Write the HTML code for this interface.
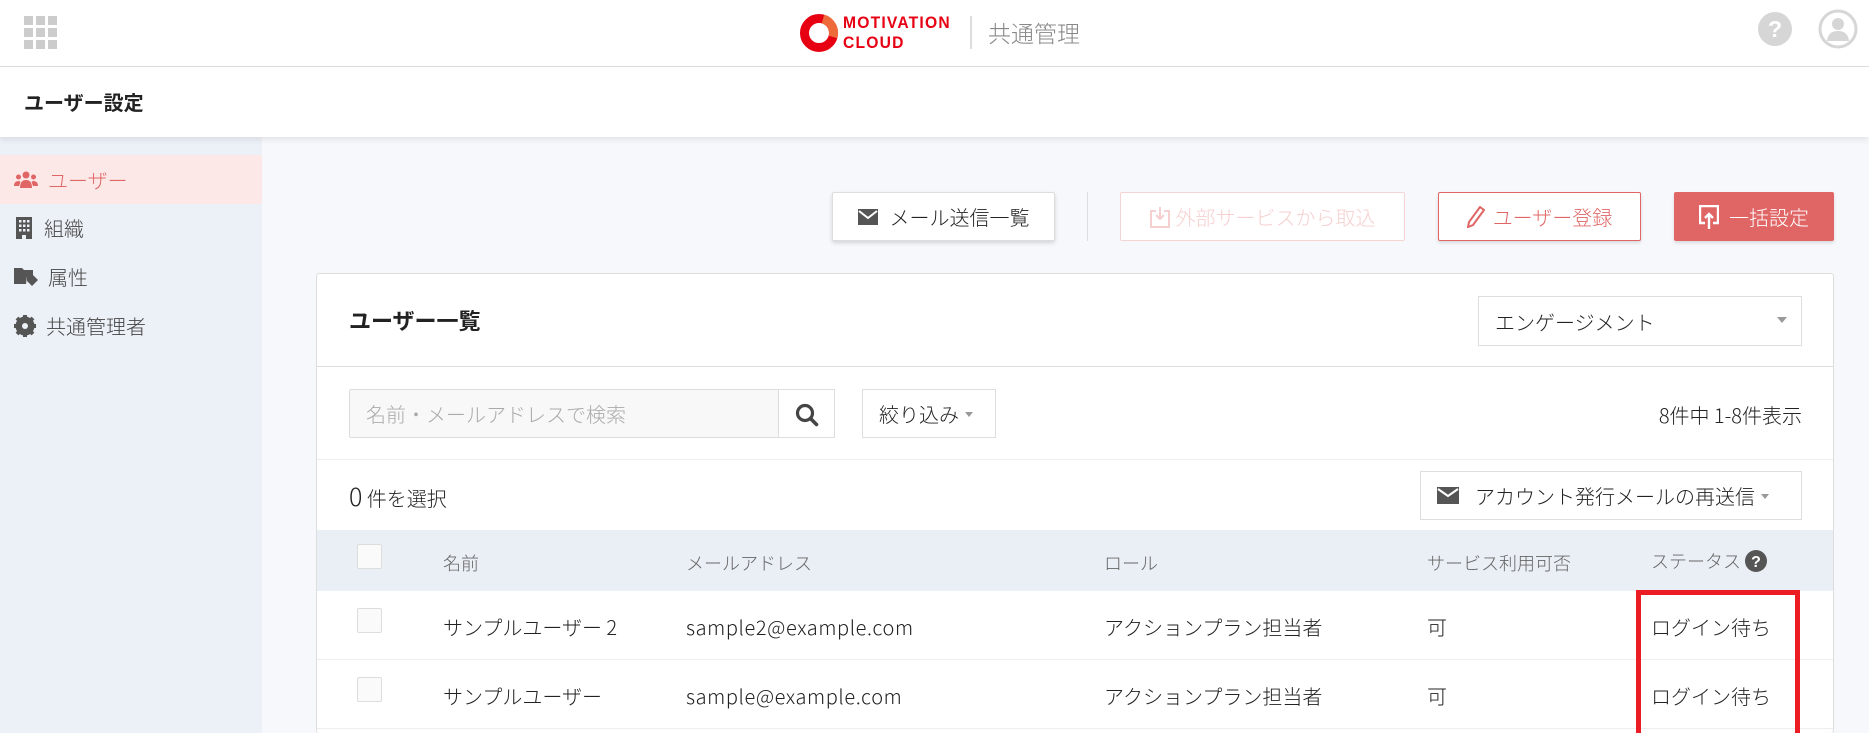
<!DOCTYPE html>
<html style="width:1869px;height:733px;overflow:hidden"><head><meta charset="utf-8"><style>
*{box-sizing:border-box;margin:0;padding:0}
body{width:1869px;height:733px;overflow:hidden;background:#f7f8fc;font-family:"Liberation Sans","Noto Sans CJK JP",sans-serif;color:#222;position:relative}
.abs{position:absolute}
.hdr{left:0;top:0;width:1869px;height:67px;background:#fff;border-bottom:1px solid #ddd}
.sub{left:0;top:67px;width:1869px;height:70px;background:#fff;box-shadow:0 3px 6px rgba(0,0,0,.08);z-index:2}
.side{left:0;top:137px;width:262px;height:596px;background:#ecf0f7}
.nav{left:0;width:262px;height:49px;display:flex;align-items:center;padding-left:14px;font-size:20px;color:#444;font-family:"Noto Sans CJK JP",sans-serif;font-weight:300}
.nav svg{margin-right:10px}
.btn{height:49px;display:flex;align-items:center;justify-content:center;font-size:20px;font-family:"Noto Sans CJK JP",sans-serif;border-radius:2px;font-weight:300}
.card{left:316px;top:273px;width:1518px;height:470px;background:#fff;border:1px solid #ddd;border-radius:3px}
.t{font-family:"Noto Sans CJK JP",sans-serif;font-size:20px;color:#222;white-space:nowrap;font-weight:300}
.cb{width:25px;height:25px;border:1px solid #ddd;background:#fafafa;border-radius:2px}
</style></head><body>
<div class="abs hdr"></div>
<svg class="abs" style="left:24px;top:16px" width="34" height="34" viewBox="0 0 34 34" fill="#ccc"><rect x="0" y="0" width="9" height="9"/><rect x="12" y="0" width="9" height="9"/><rect x="24" y="0" width="9" height="9"/><rect x="0" y="12" width="9" height="9"/><rect x="12" y="12" width="9" height="9"/><rect x="24" y="12" width="9" height="9"/><rect x="0" y="24" width="9" height="9"/><rect x="12" y="24" width="9" height="9"/><rect x="24" y="24" width="9" height="9"/></svg>
<svg class="abs" style="left:799px;top:13px" width="40" height="40" viewBox="0 0 40 40"><circle cx="20" cy="20" r="14.5" fill="none" stroke="#e60012" stroke-width="9"/><path d="M24 6 A14.5 14.5 0 0 1 34 24" stroke="#ef6a3a" stroke-width="9" fill="none"/></svg>
<div class="abs" style="left:843px;top:13px;font:bold 17px/20px 'Liberation Sans',sans-serif;color:#e60012;letter-spacing:1.3px;transform:scaleX(0.92);transform-origin:left">MOTIVATION<br>CLOUD</div>
<div class="abs" style="left:970px;top:16px;width:2px;height:33px;background:#ddd"></div>
<div class="abs t" style="left:988px;top:15px;font-size:23px;color:#888">共通管理</div>
<svg class="abs" style="left:1758px;top:12px" width="34" height="34" viewBox="0 0 34 34"><circle cx="17" cy="17" r="17" fill="#d6d6d6"/><text x="17" y="25" text-anchor="middle" font-family="Liberation Sans" font-weight="bold" font-size="23" fill="#fff">?</text></svg>
<svg class="abs" style="left:1818px;top:9px" width="40" height="40" viewBox="0 0 40 40"><circle cx="20" cy="20" r="18" fill="none" stroke="#d6d6d6" stroke-width="3"/><circle cx="20" cy="15" r="6" fill="#d6d6d6"/><path d="M9 32 Q10 22 20 22 Q30 22 31 32 Z" fill="#d6d6d6"/></svg>

<div class="abs sub"><div class="t" style="position:absolute;left:24px;top:20px;font-weight:bold;font-size:20px">ユーザー設定</div></div>

<div class="abs side"></div>
<div class="abs nav" style="top:155px;background:#fde8e8;color:#e06666"><svg width="24" height="18" viewBox="0 0 24 18" fill="#e06666"><circle cx="12" cy="4" r="3.5"/><circle cx="4.5" cy="6" r="2.5"/><circle cx="19.5" cy="6" r="2.5"/><path d="M6 17 Q6 9 12 9 Q18 9 18 17Z"/><path d="M0 15 Q0 10 4.5 10 Q6 10 6.5 11 L5 15Z"/><path d="M24 15 Q24 10 19.5 10 Q18 10 17.5 11 L19 15Z"/></svg>ユーザー</div>
<div class="abs nav" style="top:203px"><svg width="20" height="22" viewBox="0 0 20 22" fill="#555"><path d="M2 0h16v22h-6v-4h-4v4H2z"/><g fill="#ecf0f7"><rect x="5" y="3" width="2.5" height="2.5"/><rect x="9" y="3" width="2.5" height="2.5"/><rect x="13" y="3" width="2.5" height="2.5"/><rect x="5" y="7.5" width="2.5" height="2.5"/><rect x="9" y="7.5" width="2.5" height="2.5"/><rect x="13" y="7.5" width="2.5" height="2.5"/><rect x="5" y="12" width="2.5" height="2.5"/><rect x="9" y="12" width="2.5" height="2.5"/><rect x="13" y="12" width="2.5" height="2.5"/></g></svg>組織</div>
<div class="abs nav" style="top:252px"><svg width="24" height="22" viewBox="0 0 24 22" fill="#555"><path d="M0 2h8l2 2h9v6H0z"/><path d="M0 10h13l-1 8H0z"/><path d="M13 9h6l5 5-6 6-5-5z"/></svg>属性</div>
<div class="abs nav" style="top:301px"><svg width="22" height="22" viewBox="0 0 22 22"><circle cx="11" cy="11" r="7" fill="none" stroke="#555" stroke-width="5"/><g stroke="#555" stroke-width="4"><line x1="11" y1="0" x2="11" y2="22"/><line x1="0" y1="11" x2="22" y2="11"/><line x1="3" y1="3" x2="19" y2="19"/><line x1="19" y1="3" x2="3" y2="19"/></g><circle cx="11" cy="11" r="3" fill="#ecf0f7"/></svg>共通管理者</div>

<div class="abs btn" style="left:832px;top:192px;width:223px;background:#fff;border:1px solid #ddd;box-shadow:0 2px 4px rgba(0,0,0,.15)"><svg width="20" height="16" viewBox="0 0 20 16" style="margin-right:12px"><rect width="20" height="16" fill="#555"/><path d="M1 2l9 7 9-7" stroke="#fff" stroke-width="2" fill="none"/></svg>メール送信一覧</div>
<div class="abs" style="left:1087px;top:192px;width:1px;height:49px;background:#ddd"></div>
<div class="abs btn" style="left:1120px;top:192px;width:285px;background:#fff;border:1px solid #f6d4d4;color:#f6d0d0"><svg width="20" height="22" viewBox="0 0 20 22" style="margin-right:6px"><path d="M6 5H1v16h18V5h-5" stroke="#f6d0d0" stroke-width="2" fill="none"/><path d="M10 1v12M6 9l4 4 4-4" stroke="#f6d0d0" stroke-width="2" fill="none"/></svg>外部サービスから取込</div>
<div class="abs btn" style="left:1438px;top:192px;width:203px;background:#fff;border:1px solid #e06666;color:#e06666;box-shadow:0 2px 3px rgba(0,0,0,.12)"><svg width="18" height="22" viewBox="0 0 18 22" style="margin-right:8px"><path d="M13 1l4 3-11 15-5 2 1-5z" stroke="#e06666" stroke-width="2" fill="none"/></svg>ユーザー登録</div>
<div class="abs btn" style="left:1674px;top:192px;width:160px;background:#e06666;color:#fff;box-shadow:0 2px 3px rgba(0,0,0,.12)"><svg width="20" height="24" viewBox="0 0 20 24" style="margin-right:10px"><path d="M6 18H1V1h18v17h-5" stroke="#fff" stroke-width="2.4" fill="none"/><path d="M10 24V9M6 13l4-4 4 4" stroke="#fff" stroke-width="2.4" fill="none"/></svg>一括設定</div>

<div class="abs card" style="height:460px;border-bottom:none">
 <div class="abs t" style="left:32px;top:30px;font-weight:bold;font-size:22px">ユーザー一覧</div>
 <div class="abs" style="left:1161px;top:22px;width:324px;height:50px;border:1px solid #ddd;display:flex;align-items:center;padding-left:16px"><span class="t">エンゲージメント</span><span style="position:absolute;right:14px;top:20px;border:5px solid transparent;border-top:6px solid #999"></span></div>
 <div class="abs" style="left:0;top:92px;width:1516px;height:1px;background:#ddd"></div>
 <div class="abs" style="left:32px;top:115px;width:430px;height:49px;border:1px solid #ddd;background:#f8f8f8;border-radius:2px 0 0 2px;display:flex;align-items:center;padding-left:16px"><span class="t" style="color:#aaa">名前・メールアドレスで検索</span></div>
 <div class="abs" style="left:461px;top:115px;width:57px;height:49px;border:1px solid #ddd;background:#fff"><svg style="position:absolute;left:16px;top:13px" width="24" height="24" viewBox="0 0 24 24"><circle cx="10" cy="10" r="7.5" stroke="#444" stroke-width="3.2" fill="none"/><path d="M15.5 15.5l6 6" stroke="#444" stroke-width="3.6" stroke-linecap="round"/></svg></div>
 <div class="abs" style="left:545px;top:115px;width:134px;height:49px;border:1px solid #ddd;display:flex;align-items:center;padding-left:16px"><span class="t">絞り込み</span><span style="margin-left:6px;margin-top:6px;border:4px solid transparent;border-top:5px solid #999"></span></div>
 <div class="abs t" style="right:31px;top:126px">8件中 1-8件表示</div>
 <div class="abs" style="left:0;top:185px;width:1516px;height:1px;background:#eee"></div>
 <div class="abs t" style="left:32px;top:204px"><span style="font-size:25px">0</span> 件を選択</div>
 <div class="abs" style="left:1103px;top:197px;width:382px;height:49px;border:1px solid #ddd;display:flex;align-items:center;padding-left:16px"><svg width="22" height="17" viewBox="0 0 22 17" style="margin-right:16px"><rect width="22" height="17" fill="#555"/><path d="M1 2l10 7 10-7" stroke="#fff" stroke-width="2" fill="none"/></svg><span class="t">アカウント発行メールの再送信</span><span style="margin-left:6px;margin-top:6px;border:4px solid transparent;border-top:5px solid #999"></span></div>
 <div class="abs" style="left:0;top:256px;width:1516px;height:61px;background:#eaeef5"></div>
 <div class="abs cb" style="left:40px;top:270px"></div>
 <div class="abs t" style="left:126px;top:276px;color:#666;font-size:18px">名前</div>
 <div class="abs t" style="left:369px;top:276px;color:#666;font-size:18px">メールアドレス</div>
 <div class="abs t" style="left:787px;top:276px;color:#666;font-size:18px">ロール</div>
 <div class="abs t" style="left:1110px;top:276px;color:#666;font-size:18px">サービス利用可否</div>
 <div class="abs t" style="left:1334px;top:274px;color:#666;font-size:18px">ステータス <svg width="22" height="22" viewBox="0 0 22 22" style="vertical-align:-4px"><circle cx="11" cy="11" r="11" fill="#555"/><text x="11" y="17" text-anchor="middle" font-family="Liberation Sans" font-weight="bold" font-size="16" fill="#fff">?</text></svg></div>
 <div class="abs cb" style="left:40px;top:334px"></div>
 <div class="abs t" style="left:126px;top:338px">サンプルユーザー 2</div>
 <div class="abs t" style="left:369px;top:338px;letter-spacing:0.6px">sample2@example.com</div>
 <div class="abs t" style="left:787px;top:338px">アクションプラン担当者</div>
 <div class="abs t" style="left:1110px;top:338px">可</div>
 <div class="abs t" style="left:1334px;top:338px">ログイン待ち</div>
 <div class="abs" style="left:0;top:385px;width:1516px;height:1px;background:#eee"></div>
 <div class="abs cb" style="left:40px;top:403px"></div>
 <div class="abs t" style="left:126px;top:407px">サンプルユーザー</div>
 <div class="abs t" style="left:369px;top:407px;letter-spacing:0.6px">sample@example.com</div>
 <div class="abs t" style="left:787px;top:407px">アクションプラン担当者</div>
 <div class="abs t" style="left:1110px;top:407px">可</div>
 <div class="abs t" style="left:1334px;top:407px">ログイン待ち</div>
 <div class="abs" style="left:0;top:454px;width:1516px;height:1px;background:#eee"></div>
</div>
<div class="abs" style="left:1636px;top:590px;width:164px;height:143px;border:5px solid #ec1c24;border-bottom:none"></div>
</body></html>
